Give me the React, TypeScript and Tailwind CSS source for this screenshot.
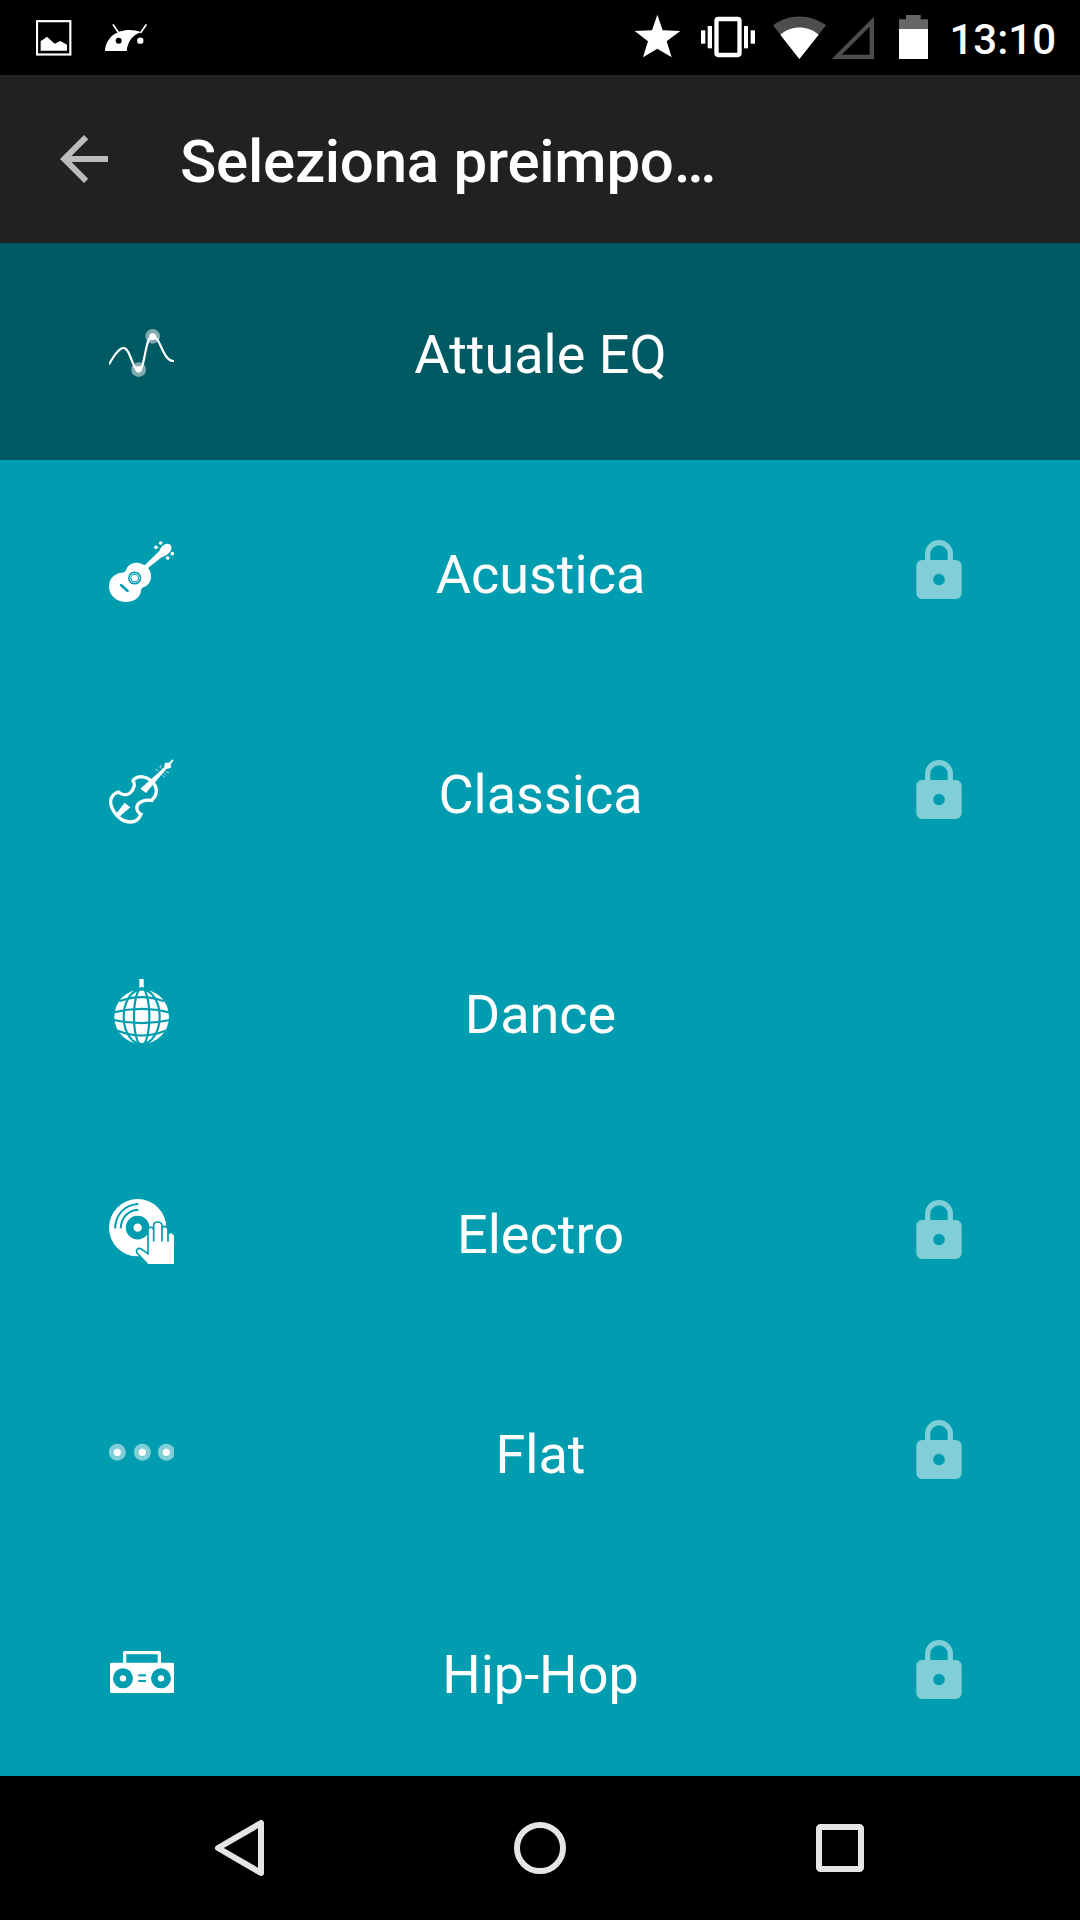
import type { ReactNode } from 'react'

const TEAL = '#009db0'

function WaveIcon() {
  return (
    <svg className="size-[65px]" viewBox="57 27 195 195" fill="none">
      <circle cx="146" cy="179" r="22" fill="#80acb1" />
      <circle cx="188" cy="79" r="22" fill="#80acb1" />
      <circle cx="146" cy="178" r="10" fill="#fff" />
      <circle cx="188" cy="80" r="10" fill="#fff" />
      <path d="M58 161C72 137 86 114 101 114C121 114 128 182 146 182C166 182 164 78 188 78C211 78 218 153 250 153" stroke="#fff" strokeWidth="6.5" strokeLinecap="round" />
    </svg>
  )
}

function GuitarIcon() {
  return (
    <svg className="size-[65px]" viewBox="57 42 195 195" fill="#fff">
      <path d="M112 127C120 113 142 109 158 118L164 121L208 78C213 64 223 55 234 56C246 58 248 72 239 82C232 90 224 94 215 97L174 129C186 142 186 165 174 178C165 189 154 185 153 198C151 218 130 232 105 231C76 229 56 208 57 183C58 158 76 144 96 143C106 143 107 137 112 127Z" />
      <circle cx="198" cy="67" r="5.5" />
      <circle cx="212" cy="54" r="5.5" />
      <circle cx="233" cy="99" r="5.5" />
      <circle cx="247" cy="86" r="5.5" />
      <circle cx="134" cy="159" r="17.5" fill="none" stroke={TEAL} strokeWidth="4.5" />
      <circle cx="134" cy="159" r="11.5" fill="none" stroke={TEAL} strokeWidth="3.5" />
      <path d="M93 180L113 198" stroke={TEAL} strokeWidth="7.5" strokeLinecap="round" />
    </svg>
  )
}

function ViolinIcon() {
  return (
    <svg className="size-[65px]" viewBox="57 42 195 195" fill="none">
      <path d="M85 141C65 147 58 165 64 183C69 198 78 210 90 220C105 233 132 236 145 221C150 215 150 212 153 208C144 203 139 196 141 184C144 170 165 163 186 166C188 160 196 157 198 146C201 131 195 117 183 107C169 94 147 92 136 100C133 103 129 105 129 108C137 117 131 134 121 143C111 152 96 151 85 141Z" stroke="#fff" strokeWidth="10" strokeLinejoin="miter" />
      <path d="M151 131L222 68L225 53L237 53L248 43L251 46L242 58L243 68L228 73L168 144Z" fill="#fff" />
      <path d="M104 173L121 187L94 210L86 218L76 209L83 200Z" fill="#fff" />
      <path d="M198 72L221 95M206 64L236 84M213 78L230 91" stroke="#fff" strokeOpacity=".7" strokeWidth="2" />
      <g fill="#fff" fillOpacity=".8">
        <circle cx="199" cy="74" r="2" />
        <circle cx="212" cy="63" r="2" />
        <circle cx="221" cy="94" r="2" />
        <circle cx="234" cy="82" r="2" />
      </g>
    </svg>
  )
}

function DiscoIcon() {
  return (
    <svg className="size-[65px]" viewBox="57 42 195 195" fill="none">
      <rect x="148" y="42" width="13" height="28" fill="#fff" />
      <circle cx="155" cy="155" r="82" fill="#fff" />
      <g stroke={TEAL} strokeWidth="6.5">
        <ellipse cx="155" cy="155" rx="23" ry="86" />
        <ellipse cx="155" cy="155" rx="54" ry="82" />
        <path d="M88 109Q155 84 222 109" />
        <path d="M70 142Q155 121 240 142" />
        <path d="M70 165Q155 184 240 165" />
        <path d="M84 197Q155 226 226 197" />
      </g>
      <path d="M144 71H166L161 76H149Z" fill={TEAL} />
    </svg>
  )
}

function TurntableIcon() {
  return (
    <svg className="size-[65px]" viewBox="57 42 195 195" fill="none">
      <circle cx="143" cy="128" r="86" fill="#fff" />
      <circle cx="143" cy="128" r="24" stroke={TEAL} strokeWidth="23" />
      <g stroke={TEAL} strokeWidth="6">
        <path d="M75 130C77 88 104 59 145 57" />
        <path d="M92 130C94 98 113 76 145 74" />
      </g>
      <path
        d="M172 236V237L142 205C135 195 145 187 154 192L174 206V136C174 124 190 124 191 135V120C192 108 214 108 216 120V134C217 121 232 121 234 134V149C236 140 251 140 252 151V250H172Z"
        fill="#fff"
        stroke={TEAL}
        strokeWidth="5"
      />
      <path d="M191 132V168M216 132V168M234 146V169" stroke={TEAL} strokeWidth="5" strokeLinecap="round" />
      <path d="M250 150V237" stroke="#fff" strokeWidth="6" />
    </svg>
  )
}

function DotsIcon() {
  return (
    <svg className="size-[65px]" viewBox="57 -18 195 195" fill="#fff">
      {[82, 157, 229].map(cx => (
        <g key={cx}>
          <circle cx={cx} cy="82" r="25.5" fill="#80ced8" />
          <circle cx={cx} cy="82" r="11" />
        </g>
      ))}
    </svg>
  )
}

function BoomboxIcon() {
  return (
    <svg className="size-[65px]" viewBox="57 27 195 195" fill="none">
      <path d="M104 101V68H208V101" stroke="#fff" strokeWidth="10" strokeLinejoin="round" />
      <rect x="60" y="98" width="192" height="91" rx="4" fill="#fff" />
      <g fill={TEAL}>
        <circle cx="99" cy="145" r="30" />
        <circle cx="213" cy="145" r="30" />
        <rect x="145" y="133" width="23" height="6" />
        <rect x="145" y="150" width="23" height="6" />
      </g>
      <circle cx="99" cy="145" r="9.5" fill="#fff" />
      <circle cx="213" cy="145" r="9.5" fill="#fff" />
    </svg>
  )
}

function LockIcon() {
  return (
    <svg className="w-[46px] h-[60px] mb-[5px]" viewBox="78 57 138 180">
      <path
        fillRule="evenodd"
        clipRule="evenodd"
        fill="#80ced8"
        d="M96 120H105V102A42 42 0 0 1 189 102V120H198A17 17 0 0 1 215 137V220A17 17 0 0 1 198 237H96A17 17 0 0 1 79 220V137A17 17 0 0 1 96 120ZM121 120H173V102A26 26 0 0 0 121 102ZM147 161A17.5 17.5 0 1 0 147 196A17.5 17.5 0 1 0 147 161Z"
      />
    </svg>
  )
}

function StatusBar() {
  return (
    <div className="h-[75px] bg-black flex items-center pl-9 pr-[24px] text-white">
      <svg className="w-9 h-[75px]" viewBox="108 0 108 225">
        <rect x="111" y="63.5" width="100" height="100" fill="none" stroke="#fff" strokeWidth="6.5" />
        <path d="M122 152V124L141 110L164 131L181 123L201 134V152Z" fill="#fff" />
      </svg>
      <svg className="w-[42px] h-[75px] ml-[33px]" viewBox="315 0 126 225">
        <path d="M315 153C317 116 346 90 388 90C401 90 413 92 424 97C398 104 383 124 380 153Z" fill="#fff" />
        <path d="M340 75L355 97M438 75L423 97" stroke="#fff" strokeWidth="5" strokeLinecap="round" />
        <circle cx="356" cy="122" r="9" />
        <circle cx="421" cy="122" r="9.5" fill="#fff" />
      </svg>

      <svg className="w-12 h-[75px] ml-auto" viewBox="42 0 144 225" fill="#fff">
        <path d="M112 44L128 91L181 93L140 124L155 172L112 146L69 172L84 124L44 93L96 91Z" />
      </svg>
      <svg className="w-[55px] h-[75px] ml-[19px]" viewBox="243 0 165 225" fill="#fff">
        <rect x="243" y="91" width="13" height="40" />
        <rect x="263" y="78" width="13" height="67" />
        <rect x="289.5" y="57" width="69" height="108" rx="5" fill="none" stroke="#fff" strokeWidth="13" />
        <rect x="372" y="78" width="12" height="67" />
        <rect x="392" y="91" width="13" height="40" />
      </svg>
      <svg className="w-[53px] h-[75px] ml-[17px]" viewBox="459 0 159 225">
        <path d="M538 177L459 76C505 41 571 41 618 76Z" fill="#4d4d4d" />
        <path d="M538 177L481 104C515 75 562 75 596 104Z" fill="#fff" />
      </svg>
      <svg className="w-11 h-[75px] ml-[5px]" viewBox="633 0 132 225">
        <path fillRule="evenodd" d="M635 177L762 50V177ZM665 164H749V80Z" fill="#4d4d4d" />
      </svg>
      <svg className="w-[29px] h-[75px] ml-6" viewBox="837 0 87 225">
        <path d="M837 87V58H858V45H902V58H924V87Z" fill="#666" />
        <rect x="837" y="87" width="87" height="90" fill="#fff" />
      </svg>
      <span className="ml-[21px] text-[42px] leading-none font-medium pt-[5px]">13:10</span>
    </div>
  )
}

function NavBar() {
  return (
    <div className="h-36 bg-black flex items-center justify-center gap-[228px]">
      {[
        <path key="back" d="M14 36L57 11V61Z" strokeLinejoin="round" />,
        <circle key="home" cx="36" cy="36" r="23" />,
        <rect key="recent" x="15" y="15" width="42" height="42" rx="1.5" />,
      ].map((shape, i) => (
        <svg key={i} className="size-[72px]" viewBox="0 0 72 72" fill="none" stroke="#e5e5e5" strokeWidth="6">
          {shape}
        </svg>
      ))}
    </div>
  )
}

type Preset = { name: string; icon: ReactNode; locked?: boolean; current?: boolean }

const PRESETS: Preset[] = [
  { name: 'Attuale EQ', icon: <WaveIcon />, current: true },
  { name: 'Acustica', icon: <GuitarIcon />, locked: true },
  { name: 'Classica', icon: <ViolinIcon />, locked: true },
  { name: 'Dance', icon: <DiscoIcon /> },
  { name: 'Electro', icon: <TurntableIcon />, locked: true },
  { name: 'Flat', icon: <DotsIcon />, locked: true },
  { name: 'Hip-Hop', icon: <BoomboxIcon />, locked: true },
]

function PresetRow({ name, icon, locked, current }: Preset) {
  return (
    <div className={`h-[217px] shrink-0 grid grid-cols-[65px_1fr_65px] items-center px-[109px] ${current ? 'bg-[#005a63]' : ''}`}>
      {icon}
      <span className="text-center text-[54px] leading-none pt-[7px] pl-px">{name}</span>
      <div className="flex justify-center">{locked && <LockIcon />}</div>
    </div>
  )
}

export default function App() {
  return (
    <div className="w-[1080px] h-[1920px] flex flex-col overflow-hidden font-[Roboto,sans-serif] text-white">
      <StatusBar />
      <header className="h-[168px] bg-[#212121] flex items-center pl-12">
        <svg className="size-[72px]" viewBox="0 0 24 24" fill="#bcbcbc">
          <path d="M20 11H7.83l5.59-5.59L12 4l-8 8 8 8 1.41-1.41L7.83 13H20v-2z" />
        </svg>
        <h1 className="ml-[60px] text-[60px] leading-none font-medium tracking-[-0.25px] pt-1.5">Seleziona preimpo…</h1>
      </header>
      <main className="flex-1 min-h-0 overflow-hidden flex flex-col gap-[3px] bg-[#009db0]">
        {PRESETS.map(p => <PresetRow key={p.name} {...p} />)}
      </main>
      <NavBar />
    </div>
  )
}
